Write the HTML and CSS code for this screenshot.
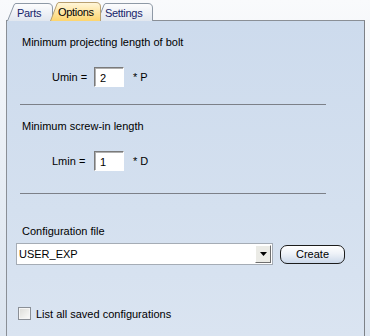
FILE: index.html
```
<!DOCTYPE html>
<html lang="en">
<head>
    <meta charset="UTF-8">
    <title>Options</title>
    <link rel="stylesheet" href="styles.css">
</head>
<body>
    <div class="tabs">
        <div class="tab tab-parts">
            <svg viewBox="0 0 46 18" width="46" height="18"><path d="M0.5 18 L7 2 Q7.6 0.5 9 0.5 L41 0.5 Q45.5 0.5 45.5 5 L45.5 18" fill="url(#tabGray)" stroke="#8e99a6"/></svg>
            <span>Parts</span>
        </div>
        <div class="tab tab-settings">
            <svg viewBox="0 0 56 18" width="56" height="18"><path d="M0.5 18 L7 2 Q7.6 0.5 9 0.5 L51 0.5 Q55.5 0.5 55.5 5 L55.5 18" fill="url(#tabGray)" stroke="#8e99a6"/></svg>
            <span>Settings</span>
        </div>
        <div class="tab tab-options">
            <svg viewBox="0 0 51 19" width="51" height="19"><path d="M0.5 19 L7 2 Q7.6 0.5 9 0.5 L46 0.5 Q50.5 0.5 50.5 5 L50.5 19" fill="url(#tabYellow)" stroke="#b8a070"/></svg>
            <span>Options</span>
        </div>
        <svg class="defs" width="0" height="0">
            <defs>
                <linearGradient id="tabGray" x1="0" y1="0" x2="0" y2="1">
                    <stop offset="0" stop-color="#fdfdfe"/>
                    <stop offset="1" stop-color="#e1e7ef"/>
                </linearGradient>
                <linearGradient id="tabYellow" x1="0" y1="0" x2="0" y2="1">
                    <stop offset="0" stop-color="#fff7dc"/>
                    <stop offset="1" stop-color="#fdd56e"/>
                </linearGradient>
            </defs>
        </svg>
    </div>

    <div class="panel">
        <div class="group-title">Minimum projecting length of bolt</div>
        <div class="factor-row">
            <span class="factor-label">Umin =</span>
            <span class="num-box">2</span>
            <span class="factor-unit">* P</span>
        </div>
        <div class="separator"></div>

        <div class="group-title">Minimum screw-in length</div>
        <div class="factor-row">
            <span class="factor-label">Lmin =</span>
            <span class="num-box">1</span>
            <span class="factor-unit">* D</span>
        </div>
        <div class="separator sep-last"></div>

        <div class="group-title config-title">Configuration file</div>
        <div class="config-row">
            <div class="combo">
                <span class="combo-value">USER_EXP</span>
                <span class="combo-btn">
                    <svg width="7" height="4" viewBox="0 0 7 4"><path d="M0 0 H7 L3.5 4 Z" fill="#000"/></svg>
                </span>
            </div>
            <button class="create-btn">Create</button>
        </div>

        <label class="check-row">
            <span class="check-box"></span>
            <span>List all saved configurations</span>
        </label>
    </div>
</body>
</html>
```

FILE: styles.css
```
* {
    margin: 0;
    padding: 0;
    box-sizing: border-box;
}

body {
    width: 370px;
    height: 336px;
    overflow: hidden;
    font-family: Tahoma, "Liberation Sans", Arial, sans-serif;
    font-size: 11px;
    color: #000;
    background: linear-gradient(180deg, #f9fafc 0%, #e8eef5 50%, #dbe4ef 100%);
}

.tabs {
    position: relative;
    height: 21px;
    padding-left: 7px;
    display: flex;
    align-items: flex-end;
}

.tab {
    position: relative;
    height: 18px;
    display: flex;
    align-items: center;
    color: #16256b;
    letter-spacing: -0.3px;
}

.tab svg {
    position: absolute;
    left: 0;
    top: 0;
}

.tab span {
    position: relative;
    padding-top: 1px;
}

.tab-parts {
    width: 46px;
    padding-left: 10px;
}

.tab-options {
    position: absolute;
    left: 50px;
    bottom: 0;
    width: 51px;
    height: 19px;
    padding-left: 8px;
    color: #000;
}

.tab-settings {
    width: 56px;
    margin-left: 44px;
    padding-left: 8px;
}

.defs {
    position: absolute;
}

.panel {
    margin: -1px 5px 0 6px;
    height: 316px;
    border: 1px solid #8a8f96;
    border-bottom: none;
    border-right-color: #7d8187;
    background: linear-gradient(180deg, #cddbed 0%, #d4e0ef 60%, #dae4f1 100%);
    padding: 14px 0 0 15px;
}

.group-title {
    height: 14px;
    line-height: 14px;
}

.factor-row {
    display: flex;
    align-items: center;
    margin-top: 18px;
    height: 20px;
}

.factor-label {
    width: 42px;
    margin-left: 30px;
}

.num-box {
    width: 30px;
    height: 20px;
    background: #fff;
    border: 1px solid #fff;
    border-top-color: #7a7a7a;
    border-left-color: #7a7a7a;
    box-shadow: inset 1px 1px 0 #b0b0b0;
    padding: 3px 0 0 5px;
    line-height: 14px;
}

.factor-unit {
    margin-left: 9px;
}

.separator {
    height: 1px;
    width: 306px;
    margin: 17px 0 14px -2px;
    background: #7c8088;
}

.sep-last {
    margin-top: 22px;
    margin-bottom: 0;
}

.config-title {
    margin-top: 30px;
}

.config-row {
    display: flex;
    align-items: center;
    margin: 5px 0 0 -6px;
}

.combo {
    width: 257px;
    height: 22px;
    background: #fff;
    border: 1px solid #a5acb5;
    display: flex;
    align-items: center;
    justify-content: space-between;
    padding: 0 1px 0 2px;
}

.combo-btn {
    width: 16px;
    height: 18px;
    border: 1px solid #fff;
    border-right-color: #6f6f6f;
    border-bottom-color: #6f6f6f;
    background: #ebebe6;
    display: flex;
    align-items: center;
    justify-content: center;
}

.create-btn {
    margin-left: 7px;
    width: 65px;
    height: 19px;
    border: 1px solid #1c1c1c;
    border-radius: 7px;
    background: linear-gradient(180deg, #ffffff 0%, #eef2f8 45%, #cbd8ea 100%);
    font: inherit;
    color: #000;
}

.check-row {
    display: flex;
    align-items: center;
    margin: 42px 0 0 -4px;
    gap: 5px;
}

.check-box {
    width: 13px;
    height: 13px;
    border: 1px solid #8a8f96;
    background: linear-gradient(135deg, #dcdcd8 0%, #f2f2f0 70%, #fbfbfb 100%);
    box-shadow: inset 0 0 0 1px #f5f5f5;
}
```
